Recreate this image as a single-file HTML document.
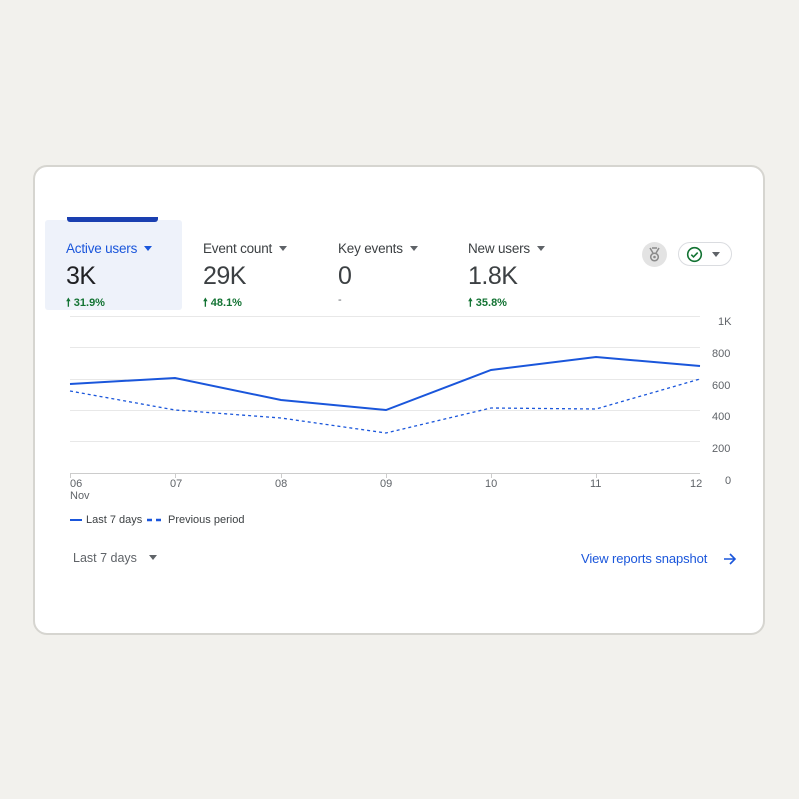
<!DOCTYPE html>
<html><head><style>
body{margin:0;width:799px;height:799px;background:#f2f1ed;font-family:"Liberation Sans",sans-serif;position:relative;overflow:hidden}
.card{position:absolute;left:33px;top:165px;width:732px;height:470px;background:#fff;border:2px solid #d6d5d0;border-radius:14px;box-sizing:border-box}
.abs{position:absolute}
.tab{position:absolute;top:241px;font-size:13.5px;color:#3c4043;letter-spacing:-0.2px}
.val{position:absolute;top:262px;font-size:25px;color:#3c4043;letter-spacing:-0.5px}
.pct{position:absolute;top:294px;font-size:11px;color:#137333;font-weight:bold}
.caret{display:inline-block;width:0;height:0;border-left:4.5px solid transparent;border-right:4.5px solid transparent;border-top:5px solid #5f6368;margin-left:7px;vertical-align:2px}
.yl{position:absolute;left:712px;font-size:11px;color:#5f6368}
.xl{position:absolute;top:478px;font-size:11px;color:#5f6368}
</style></head><body>
<div class="card"></div>
<div class="abs" style="left:45px;top:220px;width:137px;height:90px;background:#eef2fa;border-radius:3px"></div>
<div class="abs" style="left:67px;top:217px;width:91px;height:5px;background:#1a3fb0;border-radius:0 0 3px 3px"></div>
<div class="tab" style="left:66px;color:#1a56db">Active users<span class="caret" style="border-top-color:#1a56db"></span></div>
<div class="val" style="left:66px;color:#202124">3K</div>
<div class="pct" style="left:66px">🠕 31.9%</div>
<div class="tab" style="left:203px">Event count<span class="caret"></span></div>
<div class="val" style="left:203px">29K</div>
<div class="pct" style="left:203px">🠕 48.1%</div>
<div class="tab" style="left:338px">Key events<span class="caret"></span></div>
<div class="val" style="left:338px">0</div>
<div class="pct" style="left:338px;color:#5f6368;font-weight:normal">-</div>
<div class="tab" style="left:468px">New users<span class="caret"></span></div>
<div class="val" style="left:468px">1.8K</div>
<div class="pct" style="left:468px">🠕 35.8%</div>
<div class="abs" style="left:642px;top:242px;width:25px;height:25px;border-radius:50%;background:#e3e3e3">
<svg class="abs" style="left:6px;top:5px" width="13" height="15" viewBox="0 0 13 15"><path d="M2 1l3 5M11 1l-3 5M4 1h5" fill="none" stroke="#8a8a8a" stroke-width="1.5"/><circle cx="6.5" cy="10" r="3.8" fill="none" stroke="#8a8a8a" stroke-width="1.5"/><circle cx="6.5" cy="10" r="1.3" fill="#8a8a8a"/></svg></div>
<div class="abs" style="left:678px;top:242px;width:54px;height:24px;border:1px solid #dadce0;border-radius:13px;box-sizing:border-box">
<svg class="abs" style="left:7px;top:3px" width="17" height="17" viewBox="0 0 17 17"><circle cx="8.5" cy="8.5" r="6.8" fill="none" stroke="#137333" stroke-width="1.6"/><path d="M5.3 8.7l2.2 2.2 4.2-4.3" fill="none" stroke="#137333" stroke-width="1.6"/></svg>
<span class="caret" style="position:absolute;left:26px;top:9px"></span></div>
<svg class="abs" style="left:0;top:0" width="799" height="799">
<g stroke="#e8e8e8" stroke-width="1">
<line x1="70" y1="316.5" x2="700" y2="316.5"/><line x1="70" y1="347.5" x2="700" y2="347.5"/><line x1="70" y1="379.5" x2="700" y2="379.5"/><line x1="70" y1="410.5" x2="700" y2="410.5"/><line x1="70" y1="441.5" x2="700" y2="441.5"/><line x1="70" y1="473.5" x2="700" y2="473.5" stroke="#ccc"/>
</g>
<g stroke="#ccc"><line x1="70.5" y1="473" x2="70.5" y2="478"/><line x1="175.5" y1="473" x2="175.5" y2="478"/><line x1="281.5" y1="473" x2="281.5" y2="478"/><line x1="386.5" y1="473" x2="386.5" y2="478"/><line x1="491.5" y1="473" x2="491.5" y2="478"/><line x1="596.5" y1="473" x2="596.5" y2="478"/></g>
<polyline points="70,384 175,378 281,400 386,410 491,370 596,357 700,366" fill="none" stroke="#1a56db" stroke-width="2"/>
<polyline points="70,391 175,410 281,418 386,433 491,408 596,409 700,379" fill="none" stroke="#1a56db" stroke-width="1.3" stroke-dasharray="3,3"/>
<line x1="70" y1="520" x2="82" y2="520" stroke="#1a56db" stroke-width="2"/>
<line x1="147" y1="520" x2="163" y2="520" stroke="#1a56db" stroke-width="2.5" stroke-dasharray="5,4"/>
</svg>
<div class="yl" style="top:316px;left:718px">1K</div>
<div class="yl" style="top:348px">800</div>
<div class="yl" style="top:380px">600</div>
<div class="yl" style="top:411px">400</div>
<div class="yl" style="top:443px">200</div>
<div class="yl" style="top:475px;left:725px">0</div>
<div class="xl" style="left:70px;line-height:12px">06<br>Nov</div>
<div class="xl" style="left:170px">07</div>
<div class="xl" style="left:275px">08</div>
<div class="xl" style="left:380px">09</div>
<div class="xl" style="left:485px">10</div>
<div class="xl" style="left:590px">11</div>
<div class="xl" style="left:690px">12</div>
<div class="abs" style="left:86px;top:514px;font-size:11px;color:#3c4043">Last 7 days</div>
<div class="abs" style="left:168px;top:514px;font-size:11px;color:#3c4043">Previous period</div>
<div class="abs" style="left:73px;top:551px;font-size:12.5px;color:#5f6368">Last 7 days<span class="caret" style="margin-left:12px"></span></div>
<div class="abs" style="left:581px;top:551px;font-size:13px;color:#1a56db;letter-spacing:-0.1px">View reports snapshot</div>
<svg class="abs" style="left:723px;top:552px" width="14" height="14" viewBox="0 0 14 14"><path d="M1 7h11M7 2l5 5-5 5" fill="none" stroke="#1a56db" stroke-width="1.6"/></svg>
</body></html>
